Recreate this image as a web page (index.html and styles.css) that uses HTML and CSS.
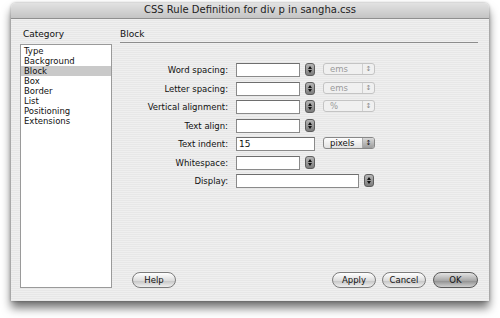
FILE: index.html
```html
<!DOCTYPE html>
<html lang="en">
<head>
  <meta charset="UTF-8">
  <title>CSS Rule Definition</title>
  <link rel="stylesheet" href="styles.css">
</head>
<body>

<div class="window">
  <div class="titlebar">CSS Rule Definition for div p in sangha.css</div>
  <div class="content">
    <div class="sidebar">
      <div class="caption">Category</div>
      <ul class="list">
        <li>Type</li>
        <li>Background</li>
        <li class="selected">Block</li>
        <li>Box</li>
        <li>Border</li>
        <li>List</li>
        <li>Positioning</li>
        <li>Extensions</li>
      </ul>
    </div>
    <div class="main">
      <div class="caption heading">Block</div>
      <div class="form">
        <label>Word spacing:</label>
        <div class="controls">
          <span class="field"></span>
          <span class="stepper"></span>
          <span class="popup disabled">ems</span>
        </div>
        <label>Letter spacing:</label>
        <div class="controls">
          <span class="field"></span>
          <span class="stepper"></span>
          <span class="popup disabled">ems</span>
        </div>
        <label>Vertical alignment:</label>
        <div class="controls">
          <span class="field"></span>
          <span class="stepper"></span>
          <span class="popup disabled">%</span>
        </div>
        <label>Text align:</label>
        <div class="controls">
          <span class="field"></span>
          <span class="stepper"></span>
        </div>
        <label>Text indent:</label>
        <div class="controls">
          <span class="field wide">15</span>
          <span class="popup">pixels</span>
        </div>
        <label>Whitespace:</label>
        <div class="controls">
          <span class="field"></span>
          <span class="stepper"></span>
        </div>
        <label>Display:</label>
        <div class="controls">
          <span class="field long"></span>
          <span class="stepper"></span>
        </div>
      </div>
      <div class="buttons">
        <button class="btn help">Help</button>
        <button class="btn">Apply</button>
        <button class="btn">Cancel</button>
        <button class="btn default">OK</button>
      </div>
    </div>
  </div>
</div>

</body>
</html>
```

FILE: styles.css
```css
body {
  margin: 0;
  width: 500px;
  height: 318px;
  background-color: #fff;
  font-family: "DejaVu Sans", Verdana, sans-serif;
  font-size: 8.5px;
  color: #111;
  overflow: hidden;
}

.window {
  margin: 3px 0 0 11px;
  width: 478px;
  height: 298px;
  display: flex;
  flex-direction: column;
  border-radius: 5px 5px 0 0;
  background: repeating-linear-gradient(#efefef 0, #efefef 1px, #e7e7e7 1px, #e7e7e7 2px);
  box-shadow: 0 7px 10px rgba(0, 0, 0, 0.55), 0 0 3px rgba(0, 0, 0, 0.35);
}

.titlebar {
  height: 15px;
  line-height: 14px;
  text-align: center;
  font-size: 10px;
  color: #222;
  border-radius: 5px 5px 0 0;
  background: linear-gradient(#e2e2e2, #c4c4c4);
  border-bottom: 1px solid #8f8f8f;
}

.content {
  flex: 1;
  display: flex;
  padding: 9px 11px 13px 9px;
}

.sidebar {
  width: 92px;
  display: flex;
  flex-direction: column;
}

.caption {
  height: 16px;
  line-height: 12px;
  padding-left: 3px;
  font-size: 9px;
}

.list {
  flex: 1;
  margin: 0;
  padding: 1px 0 0;
  list-style: none;
  background-color: #fff;
  border: 1px solid #9a9a9a;
}

.list li {
  height: 10px;
  line-height: 10px;
  padding-left: 3px;
}

.list li.selected {
  background-color: #c9c9c9;
}

.main {
  flex: 1;
  margin-left: 8px;
  display: flex;
  flex-direction: column;
}

.heading {
  padding-left: 0;
  border-bottom: 1px solid #8c8c8c;
  height: 14px;
}

.form {
  margin-top: 20px;
  display: grid;
  grid-template-columns: 108px 1fr;
  grid-auto-rows: 18.5px;
  column-gap: 8px;
}

.form label {
  text-align: right;
  line-height: 14px;
}

.controls {
  display: flex;
  align-items: flex-start;
  gap: 5px;
}

.field {
  width: 60px;
  height: 12px;
  line-height: 12px;
  padding-left: 2px;
  box-sizing: content-box;
  background-color: #fff;
  border: 1px solid #8a8a8a;
  border-top-color: #6e6e6e;
  font-size: 9px;
}

.field.wide {
  width: 75px;
}

.field.long {
  width: 119px;
}

.stepper {
  width: 10px;
  height: 13px;
  border-radius: 3px;
  background: linear-gradient(#b5b5b5, #7d7d7d);
  border: 1px solid #5e5e5e;
  box-sizing: border-box;
  position: relative;
}

.stepper::before,
.stepper::after {
  content: "";
  position: absolute;
  left: 2px;
  border-left: 2px solid transparent;
  border-right: 2px solid transparent;
}

.stepper::before {
  top: 2px;
  border-bottom: 3px solid #111;
}

.stepper::after {
  bottom: 2px;
  border-top: 3px solid #111;
}

.popup {
  width: 52px;
  height: 12px;
  line-height: 11px;
  margin-left: 3px;
  padding-left: 6px;
  box-sizing: border-box;
  border: 1px solid #888;
  border-radius: 3px;
  background: linear-gradient(#fdfdfd, #e2e2e2);
  position: relative;
  font-size: 8.5px;
}

.popup::after {
  content: "\2195";
  position: absolute;
  right: 0;
  top: 0;
  width: 11px;
  height: 10px;
  text-align: center;
  font-size: 7px;
  line-height: 10px;
  border-left: 1px solid #aaa;
  border-radius: 0 2px 2px 0;
  background: linear-gradient(#d8d8d8, #9c9c9c);
}

.popup.disabled {
  color: #9a9a9a;
  border-color: #c4c4c4;
  background: #f0f0f0;
}

.popup.disabled::after {
  color: #8a8a8a;
  background: none;
  border-left-color: #d0d0d0;
}

.buttons {
  margin-top: auto;
  display: flex;
  gap: 6px;
}

.btn {
  height: 16px;
  width: 44px;
  padding: 0;
  font-family: inherit;
  font-size: 8.5px;
  color: #111;
  border: 1px solid #7c7c7c;
  border-radius: 8px;
  background: linear-gradient(#ffffff, #dcdcdc 55%, #c9c9c9 60%, #efefef);
}

.btn.help {
  margin-left: 12px;
  margin-right: auto;
}

.btn.default {
  margin-left: 1px;
  width: 45px;
  border-color: #5a5a5a;
  background: linear-gradient(#e3e3e3, #a7a7a7 55%, #959595 60%, #cfcfcf);
}
```
